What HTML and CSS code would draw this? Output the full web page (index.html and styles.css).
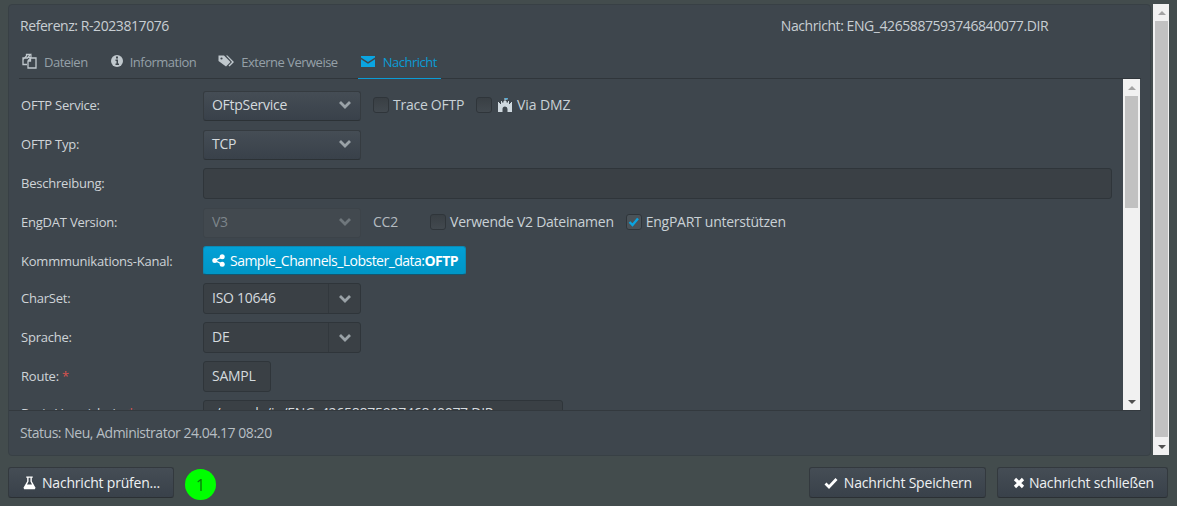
FILE: index.html
```html
<!DOCTYPE html>
<html lang="de">
<head>
<meta charset="utf-8">
<title>Nachricht</title>
<link rel="stylesheet" href="styles.css">
</head>
<body>
<div class="top">
  <main class="panel">
    <div class="head"><span>Referenz: R-2023817076</span><span class="head-right">Nachricht: ENG_4265887593746840077.DIR</span></div>
    <nav class="tabs">
      <a class="tab"><svg class="ti i-files" viewBox="0 0 15 16"><path d="M1 6.500 4.500 3V1.500h4l-3 3.500H1zM1 6v5.500h4" fill="none" stroke="currentColor" stroke-width="1.300"/><path d="M9 1.500v3H5.500" fill="none" stroke="currentColor" stroke-width="1.100"/><path d="M8.500 5H14v10H6V8zM8.500 5v3H6" fill="none" stroke="currentColor" stroke-width="1.300"/></svg>Dateien</a>
      <a class="tab"><svg class="ti i-info" viewBox="0 0 12 16"><circle cx="6" cy="8" r="6" fill="currentColor"/><path d="M5 3.500h2v2H5zM4.500 6.500H7v4h1V12H4.500v-1.500h1V8h-1z" fill="#3e464d"/></svg>Information</a>
      <a class="tab ext"><svg class="ti i-tag" viewBox="0 0 16 16"><path d="M.5 2.500h5.500l6.500 6.500-4.500 4.500L.5 8z" fill="currentColor"/><path d="M8 2.500h1.500L16 9l-4.500 4.500-1-1L14 9z" fill="currentColor"/><circle cx="3.500" cy="5.500" r="1.100" fill="#3e464d"/></svg>Externe Verweise</a>
      <a class="tab active"><svg class="ti i-mail" viewBox="0 0 14 16"><path d="M0 3h14v1.500L7 9 0 4.500zM0 6.200 7 10.800l7-4.600V14H0z" fill="currentColor"/></svg>Nachricht</a>
    </nav>
    <div class="inner">
      <div class="form">
        <div class="row"><label>OFTP Service:</label><div class="sel w158">OFtpService<svg class="chev" viewBox="0 0 14 10"><path d="M2 2l5 5 5-5" /></svg></div>
          <span class="cb first"></span><span class="cbl">Trace OFTP</span>
          <span class="cb second"></span><svg class="dmz" viewBox="0 0 14 14"><path d="M6.500 0h3v1.500h-2V3h1v1.500H10V3h1v3h1v-1h1v-1 0h1v10H9.500v-3a2.500 2.500 0 0 0-5 0v3H0V4h1v1h1v1h1V3h1v1.500h1.500V3h1z" fill="#cfd8de"/><path d="M7 0h2.500v1.500H7z" fill="#4fb0e0"/></svg><span class="cbl dmzl">Via DMZ</span></div>
        <div class="row"><label>OFTP Typ:</label><div class="sel w158">TCP<svg class="chev" viewBox="0 0 14 10"><path d="M2 2l5 5 5-5" /></svg></div></div>
        <div class="row"><label>Beschreibung:</label><div class="input full"></div></div>
        <div class="row"><label>EngDAT Version:</label><div class="sel w158 off">V3<svg class="chev" viewBox="0 0 14 10"><path d="M2 2l5 5 5-5" /></svg></div>
          <span class="cc">CC2</span><span class="cb third"></span><span class="cbl">Verwende V2 Dateinamen</span>
          <span class="cb fourth"><svg viewBox="0 0 14 14"><path d="M2.500 7 5.500 10 11 3.500" fill="none" stroke="#0ba4e0" stroke-width="2.400"/></svg></span><span class="cbl">EngPART unterstützen</span></div>
        <div class="row short"><label>Kommmunikations-Kanal:</label><div class="link"><svg class="share" viewBox="0 0 14 14"><circle cx="3" cy="7" r="2.700"/><circle cx="11" cy="3" r="2.700"/><circle cx="11" cy="11" r="2.700"/><path d="M3 7l8-4M3 7l8 4" stroke="#fff" stroke-width="1.500"/></svg>Sample_Channels_Lobster_data:<b>OFTP</b></div></div>
        <div class="row"><label>CharSet:</label><div class="combo w158"><span class="val">ISO 10646</span><span class="arrow"><svg class="chev" viewBox="0 0 14 10"><path d="M2 2l5 5 5-5" /></svg></span></div></div>
        <div class="row"><label>Sprache:</label><div class="combo w158"><span class="val">DE</span><span class="arrow"><svg class="chev" viewBox="0 0 14 10"><path d="M2 2l5 5 5-5" /></svg></span></div></div>
        <div class="row"><label>Route: <i>*</i></label><div class="input w68">SAMPL</div></div>
        <div class="row cut"><label>Basis-Verzeichnis: <i>*</i></label><div class="input w360">./sample/in/ENG_4265887593746840077.DIR</div></div>
      </div>
      <div class="sb inner-sb"><span class="up"></span><span class="thumb"></span><span class="dn"></span></div>
    </div>
    <div class="status">Status: Neu, Administrator 24.04.17 08:20</div>
  </main>
  <div class="sb outer-sb"><span class="up"></span><span class="thumb"></span><span class="dn"></span></div>
</div>
<footer class="foot">
  <button class="btn test"><svg class="bi flask" viewBox="0 0 14 14"><path d="M3.500 0h7v1.300H9.500v3.700l4 7.200-.8 1.500H1.300l-.8-1.500 4-7.200V1.300h-1zM6 1.300v4.100L4.300 8.500h5.400L8 5.400V1.300z" fill="#fff"/></svg>Nachricht prüfen...</button>
  <span class="badge">1</span>
  <span class="grow"></span>
  <button class="btn save"><svg class="bi" viewBox="0 0 14 14"><path d="M1.500 7.500 5 11l7.500-8" fill="none" stroke="#fff" stroke-width="2.800"/></svg>Nachricht Speichern</button>
  <button class="btn close"><svg class="bi small" viewBox="0 0 12 12"><path d="M2 2l8 8M10 2l-8 8" fill="none" stroke="#fff" stroke-width="3.200"/></svg>Nachricht schließen</button>
</footer>
</body>
</html>
```
FILE: styles.css
```css
* { box-sizing: border-box; }
html, body { margin: 0; height: 506px; overflow: hidden; }
body {
  background: #434c4d;
  font-family: "Open Sans", sans-serif;
  font-size: 14px;
  color: #d3d8dc;
  padding: 4px 8px 0;
}
.top { display: flex; gap: 2px; height: 452px; }
.panel {
  flex: 0 0 1143px;
  background: #3e464d;
  border: 1px solid #384045;
  border-radius: 4px;
  display: flex;
  flex-direction: column;
}
.head {
  display: flex;
  height: 34px;
  padding: 11px 0 0 11px;
  line-height: 20px;
  font-size: 14px;
  color: #c8ced3;
  letter-spacing: -.43px;
}
.head-right { margin-left: 612px; }
.tabs {
  display: flex;
  height: 40px;
  margin: 0 9px 0 10px;
  padding-top: 14px;
  border-bottom: 1px solid #30363b;
}
.tab {
  display: flex;
  align-items: flex-start;
  height: 26px;
  padding: 0 4px 0 3px;
  margin-right: 15px;
  font-size: 13px;
  line-height: 18px;
  letter-spacing: -.5px;
  color: #95a0a8;
}
.tab:first-child, .tab.ext { margin-right: 16px; }
.ti { height: 16px; margin-right: 7px; flex: none; color: #c0c8cd; }
.i-files { width: 15px; }
.i-info { width: 12px; }
.i-tag { width: 16px; }
.i-mail { width: 14px; }
.tab.active { color: #0a9cd6; border-bottom: 1px solid #0a9cd6; }
.tab.active .ti { color: #0aa5e2; margin-right: 8px; }
.inner { display: flex; height: 331px; padding-left: 12px; padding-right: 10px; }
.form { flex: 1; overflow: hidden; padding-top: 11px; }
.row { display: flex; align-items: center; height: 31px; margin-bottom: 8px; }
.row.short { height: 29px; }
.row label { flex: 0 0 182px; padding-bottom: 2px; font-size: 13px; letter-spacing: -.22px; color: #cfd4d8; }
.row.short label { padding-bottom: 0; }
.row.cut label { padding-bottom: 6px; }
.row label i { color: #d9534f; font-style: normal; }
.sel, .combo, .input { border-radius: 3px; font-size: 14px; color: #d5dade; letter-spacing: -.27px; }
.sel {
  display: flex;
  align-items: center;
  justify-content: space-between;
  height: 30px;
  padding: 0 8px 2px;
  background: linear-gradient(#454d55, #39414a);
  border: 1px solid #353b40;
  border-bottom-color: #2c3236;
}
.sel.off { color: #7d858b; background: #42494f; border-color: #3c4349; }
.sel.off .chev path { stroke: #6f777c; }
.w158 { width: 158px; }
.chev { width: 14px; height: 10px; }
.chev path { fill: none; stroke: #9aa2a7; stroke-width: 2.800; }
.combo { display: flex; align-items: center; height: 31px; background: #3a4045; border: 1px solid #2f353a; }
.combo .val { flex: 1; padding: 0 0 2px 8px; }
.combo .arrow { flex: 0 0 32px; height: 100%; border-left: 1px solid #32383d; display: flex; align-items: center; justify-content: center; }
.input { display: flex; align-items: center; height: 31px; padding: 0 0 2px 8px; background: #3a4045; border: 1px solid #2f353a; }
.row.cut .input { padding-bottom: 6px; }
.full { width: 909px; }
.w68 { width: 68px; }
.w360 { width: 360px; }
.cb {
  width: 16px; height: 16px;
  margin-bottom: 2px;
  border-radius: 3px;
  background: linear-gradient(#393f44, #42494f);
  border: 1px solid #2f353a;
  flex: none;
  display: flex;
}
.cb svg { width: 14px; height: 14px; }
.first { margin-left: 12px; margin-right: 4px; }
.second { margin-left: 12px; margin-right: 6px; }
.third { margin-left: 32px; margin-right: 4px; }
.fourth { margin-left: 12px; margin-right: 4px; background: #4a5258; }
.cbl { padding-bottom: 2px; font-size: 14px; color: #c9d1d6; letter-spacing: -.26px; }
.dmzl { letter-spacing: -.1px; }
.cc { margin-left: 12px; padding-bottom: 2px; color: #b4bbc0; font-size: 14px; letter-spacing: -.2px; }
.dmz { width: 14px; height: 14px; margin: 0 5px 2px 0; flex: none; }
.link {
  display: flex;
  align-items: center;
  height: 29px;
  padding: 0 7px 0 8px;
  background: linear-gradient(#02a0d6, #0096c6);
  border: 1px solid #0a8ab5;
  border-bottom-color: #14566e;
  border-radius: 3px;
  color: #fff;
  font-size: 14px;
  letter-spacing: -.52px;
}
.share { width: 13px; height: 13px; margin-right: 5px; fill: #fff; }
.link b { font-weight: 700; }
.sb { display: flex; flex-direction: column; align-items: center; background: #f1f1f1; flex: none; }
.thumb { background: #c1c1c1; width: 13px; }
.up, .dn { width: 0; height: 0; border-left: 4px solid transparent; border-right: 4px solid transparent; }
.up { border-bottom: 4px solid #a3a3a3; margin: 7px 0 6px; }
.dn { border-top: 4px solid #505050; margin-top: auto; margin-bottom: 6px; }
.inner-sb { width: 17px; margin-left: 11px; }
.inner-sb .thumb { height: 112px; }
.outer-sb { width: 16px; height: 451px; padding-left: 1px; }
.outer-sb .thumb { height: 416px; }
.status {
  border-top: 1px solid #33393e;
  margin-right: 9px;
  padding: 12px 0 0 11px;
  font-size: 14px;
  color: #b7bec3;
  letter-spacing: -.47px;
}
.foot { display: flex; align-items: flex-start; height: 33px; margin-top: 11px; }
.btn {
  display: flex;
  align-items: center;
  height: 31px;
  padding: 0 13px 0 14px;
  font-family: inherit;
  font-size: 14px;
  color: #eef1f3;
  background: linear-gradient(#454d55, #39414a);
  border: 1px solid #33393e;
  border-bottom-color: #2b3034;
  border-radius: 3px;
  letter-spacing: -.2px;
}
.bi { width: 14px; height: 14px; margin-right: 6px; flex: none; }
.bi.flask { width: 13px; height: 14px; }
.bi.small { width: 12px; height: 12px; margin-right: 4px; }
.badge {
  width: 31px; height: 31px;
  margin: 2px 0 0 11px;
  border-radius: 50%;
  background: #00ff00;
  color: #0a7a0a;
  display: flex;
  align-items: center;
  justify-content: center;
  font-size: 16px;
}
.grow { flex: 1; }
.save { margin-right: 11px; }
.close { margin-right: 1px; padding-left: 15px; }
```
